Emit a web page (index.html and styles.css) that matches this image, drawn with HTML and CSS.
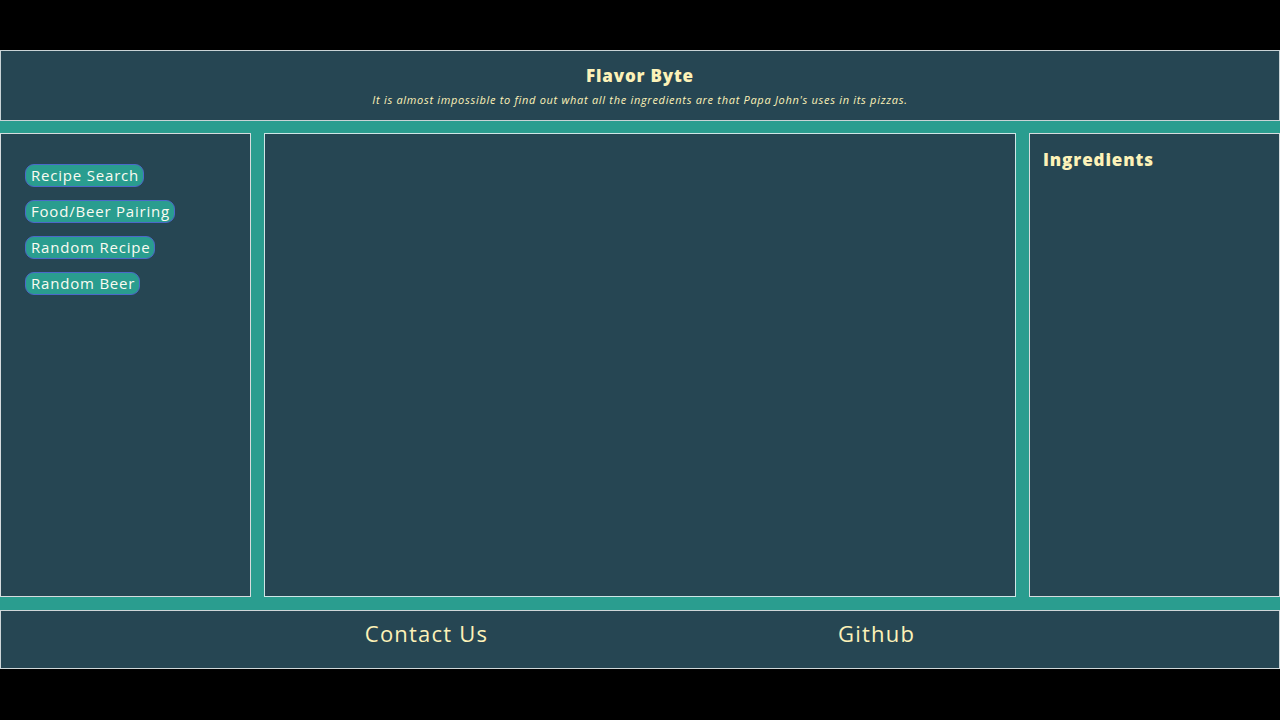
FILE: index.html
```html
<!DOCTYPE html>
<html lang="en">
<head>
<meta charset="utf-8">
<title>Flavor Byte</title>
<link rel="stylesheet" href="styles.css">
</head>
<body>
<div class="page">
  <header class="header">
    <h1 class="title">Flavor Byte</h1>
    <p class="tagline">It is almost impossible to find out what all the ingredients are that Papa John's uses in its pizzas.</p>
  </header>
  <main class="main">
    <nav class="panel side">
      <button class="btn">Recipe Search</button>
      <button class="btn">Food/Beer Pairing</button>
      <button class="btn">Random Recipe</button>
      <button class="btn">Random Beer</button>
    </nav>
    <section class="panel center"></section>
    <aside class="panel ingredients">
      <h2 class="ing-title">Ingredients</h2>
    </aside>
  </main>
  <footer class="footer">
    <a class="foot-link">Contact Us</a>
    <a class="foot-link">Github</a>
  </footer>
</div>
</body>
</html>
```
FILE: styles.css
```css
* { box-sizing: border-box; }
html, body { margin: 0; padding: 0; background: #000; height: 100%; }
body { padding-top: 50px; font-family: "Open Sans", "Lato", sans-serif; }
.page {
  background: #2a9d8f;
  display: flex;
  flex-direction: column;
  gap: 12px;
}
.header {
  height: 71px;
  background: #264653;
  border: 1px solid #c9d3d6;
  text-align: center;
  padding-top: 15px;
}
.title {
  margin: 0;
  font-family: "Open Sans", sans-serif;
  font-weight: 800;
  font-size: 17px;
  line-height: 20px;
  letter-spacing: 0.8px;
  color: #fdf2b8;
}
.tagline {
  margin: 7px 0 0;
  font-family: "Open Sans", sans-serif;
  font-style: italic;
  font-size: 11px;
  line-height: 14px;
  letter-spacing: 0.7px;
  color: #fdf2b8;
}
.main {
  display: grid;
  grid-template-columns: 251px 1fr 251px;
  gap: 13px;
  height: 464px;
}
.panel {
  background: #264653;
  border: 1px solid #d6dcde;
}
.center { border-color: #cfe6e6; }
.side {
  display: flex;
  flex-direction: column;
  align-items: flex-start;
  gap: 13px;
  padding: 30px 0 0 24px;
}
.btn {
  font-family: "Open Sans", sans-serif;
  font-size: 15px;
  font-weight: 500;
  line-height: 19px;
  letter-spacing: 0.8px;
  color: #fbfbf2;
  background: #2a9d8f;
  border: 1px solid #4b68c9;
  border-radius: 9px;
  padding: 0 4px 1px 5px;
  height: 23px;
  cursor: pointer;
}
.ingredients { padding: 15px 13px; }
.ing-title {
  margin: 0;
  font-family: "Open Sans", sans-serif;
  font-weight: 800;
  font-size: 17px;
  line-height: 22px;
  letter-spacing: 0.9px;
  color: #fdf2b8;
}
.footer {
  margin-top: 1px;
  height: 59px;
  background: #264653;
  border: 1px solid #cfd6d8;
  display: flex;
  justify-content: center;
  gap: 350px;
  padding-top: 7px;
}
.foot-link {
  font-family: "Open Sans", sans-serif;
  font-size: 22px;
  line-height: 30px;
  letter-spacing: 1.2px;
  color: #fdf2b8;
}
```
